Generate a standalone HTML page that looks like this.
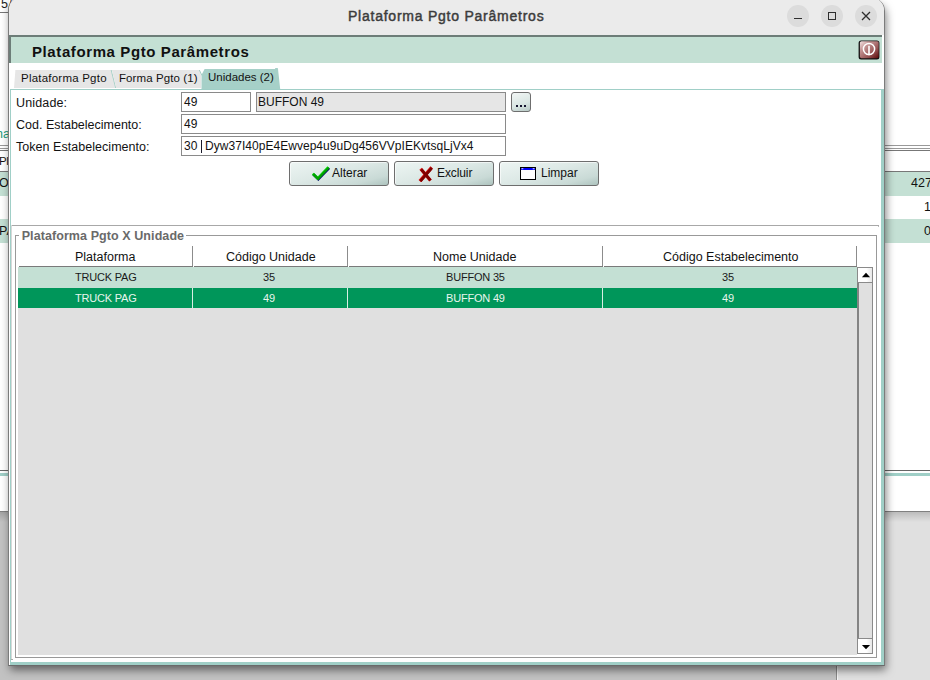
<!DOCTYPE html>
<html><head><meta charset="utf-8">
<style>
*{margin:0;padding:0;box-sizing:border-box}
html,body{width:930px;height:680px;overflow:hidden;background:#fff;font-family:"Liberation Sans",sans-serif;position:relative}
.a{position:absolute}
.t{position:absolute;white-space:nowrap;line-height:1;font-size:12.5px;color:#121212}
.inp{position:absolute;border:1px solid #8a8a8a;background:#fff}
.btn{position:absolute;width:100px;height:25px;border:1px solid #6e6e6e;border-radius:3px;background:linear-gradient(165deg,#edf5f3 0%,#dde9e6 45%,#c9dad6 80%,#adc3be 100%);box-shadow:inset 1px 1px 0 rgba(255,255,255,.6)}
.hd{position:absolute;top:246px;width:1px;height:20px;background:#8c8c8c}
.rt{position:absolute;white-space:nowrap;line-height:1;font-size:11px;letter-spacing:-0.2px;color:#1a1a1a}
.rd{position:absolute;top:288px;width:1px;height:20px;background:#d8eee4}
</style></head><body>
<!-- background app -->
<div class="a" style="left:0;top:511px;width:836px;height:169px;background:#c2c2c2"></div>
<div class="a" style="left:838px;top:511px;width:92px;height:169px;background:#e0e0e0"></div>
<div class="a" style="left:836px;top:511px;width:1px;height:169px;background:#8a8a8a"></div>
<div class="a" style="left:0;top:511px;width:930px;height:1px;background:#808080"></div><div class="a" style="left:0;top:512px;width:930px;height:10px;background:linear-gradient(rgba(0,0,0,.16),rgba(0,0,0,0))"></div>
<div class="a" style="left:837px;top:511px;width:1px;height:169px;background:#f4f4f4"></div>
<div class="a" style="left:0;top:12px;width:10px;height:1px;background:#777"></div>
<div class="t" style="left:1px;top:-2px;font-size:12.5px;color:#222;letter-spacing:0.5px">5/</div>
<div class="t" style="left:-4px;top:128px;font-size:12.5px;color:#1a9a7a">na</div>
<div class="a" style="left:0;top:145px;width:10px;height:1px;background:#999"></div>
<div class="a" style="left:0;top:148px;width:10px;height:1px;background:#999"></div><div class="a" style="left:0;top:150px;width:10px;height:1px;background:#777"></div>
<div class="t" style="left:-1px;top:156px;font-size:11.5px;letter-spacing:-0.5px">Pla</div>
<div class="a" style="left:0;top:171px;width:10px;height:1px;background:#777"></div>
<div class="a" style="left:0;top:172px;width:10px;height:24px;background:#c4e0d4"></div>
<div class="a" style="left:0;top:219px;width:10px;height:24px;background:#c4e0d4"></div>
<div class="t" style="left:-1px;top:177px">O</div>
<div class="t" style="left:-1px;top:225px">PA</div>
<div class="a" style="left:0;top:470px;width:10px;height:1px;background:#666"></div>
<div class="a" style="left:0;top:473px;width:10px;height:3px;background:#a0cfc7"></div>
<!-- right strip rows -->
<div class="a" style="left:884px;top:145px;width:46px;height:1px;background:#999"></div>
<div class="a" style="left:884px;top:148px;width:46px;height:1px;background:#999"></div><div class="a" style="left:884px;top:150px;width:46px;height:1px;background:#777"></div>
<div class="a" style="left:884px;top:171px;width:46px;height:1px;background:#777"></div>
<div class="a" style="left:884px;top:172px;width:46px;height:24px;background:#c4e0d4"></div>
<div class="a" style="left:884px;top:219px;width:46px;height:24px;background:#c4e0d4"></div>
<div class="t" style="left:911px;top:177px;">427</div>
<div class="t" style="left:924px;top:201px;">1</div>
<div class="t" style="left:924px;top:225px;">0</div>
<div class="a" style="left:884px;top:470px;width:46px;height:1px;background:#666"></div>
<div class="a" style="left:884px;top:473px;width:46px;height:3px;background:#a0cfc7"></div>

<!-- dialog shadow -->
<div class="a" style="left:9px;top:0;width:876px;height:666px;box-shadow:1px 4px 8px rgba(0,0,0,.5);border-top-right-radius:12px"></div>
<!-- dialog -->
<div class="a" style="left:8px;top:-2px;width:877px;height:668px;background:#fff;border-top-right-radius:13px;border-top-left-radius:12px;overflow:hidden;border-left:1px solid #7c7c7c;border-right:1px solid #7c7c7c;border-bottom:1px solid #6a6a6a">
  <div class="a" style="left:0;top:0;width:877px;height:37px;background:#ebebeb"></div>
</div>
<div class="t" style="left:348px;top:9px;font-size:14px;font-weight:normal;color:#3c3c3c;letter-spacing:0.76px;-webkit-text-stroke:0.45px #3c3c3c">Plataforma Pgto Parâmetros</div>
<!-- window buttons -->
<div class="a" style="left:787px;top:5px;width:22px;height:22px;border-radius:50%;background:#dcdcdc"></div>
<div class="a" style="left:821px;top:5px;width:22px;height:22px;border-radius:50%;background:#dcdcdc"></div>
<div class="a" style="left:855px;top:5px;width:22px;height:22px;border-radius:50%;background:#dcdcdc"></div>
<div class="a" style="left:794px;top:18px;width:8px;height:1.2px;background:#2e2e2e"></div>
<div class="a" style="left:828px;top:12px;width:8px;height:8px;border:1.3px solid #2e2e2e"></div>
<svg class="a" style="left:861px;top:11px" width="10" height="10" viewBox="0 0 10 10"><path d="M1 1L9 9M9 1L1 9" stroke="#2e2e2e" stroke-width="1.3"/></svg>

<!-- header band -->
<div class="a" style="left:9px;top:35px;width:873px;height:28px;background:#c4e0d4;border-top:2px solid #6d7d78;border-left:2px solid #6d7d78"></div>
<div class="t" style="left:32px;top:44px;font-size:15px;font-weight:bold;color:#111;letter-spacing:0.6px">Plataforma Pgto Parâmetros</div>
<!-- power icon -->
<svg class="a" style="left:857px;top:39px" width="24" height="22" viewBox="0 0 24 22">
<defs><linearGradient id="pg" x1="0" y1="0" x2="1" y2="1"><stop offset="0" stop-color="#f4e4e4"/><stop offset="0.3" stop-color="#c49494"/><stop offset="0.65" stop-color="#9a5858"/><stop offset="1" stop-color="#5a0808"/></linearGradient></defs>
<rect x="1.6" y="1.4" width="20.8" height="19" rx="2.5" fill="#111"/>
<rect x="2.9" y="2.2" width="18.8" height="17" rx="1.6" fill="url(#pg)"/>
<circle cx="12" cy="10" r="5.6" fill="none" stroke="#fff" stroke-width="1.5"/>
<path d="M12 6.8V16.2" stroke="#fff" stroke-width="1.6"/>
</svg>
<!-- tabs -->
<svg class="a" style="left:12px;top:66px" width="272" height="24" viewBox="0 0 272 24">
  <path d="M2 22L3.4 4H99.2L103.7 22Z" fill="#e6e6e6"/>
  <path d="M99.2 4L103.7 22" stroke="#a6d0c8" stroke-width="1" fill="none"/>
  <path d="M104.2 22L99.9 4H188L189 9V22Z" fill="#e6e6e6"/>
  <path d="M187.3 4L190 9.5" stroke="#a6d0c8" stroke-width="1" fill="none"/>
  <path d="M189.5 23V9L192.6 3H263L263.3 2H265.7L266 3L268.2 23Z" fill="#a6d0c8"/>
</svg>
<div class="t" style="left:21px;top:73px;font-size:11.5px;letter-spacing:0.22px">Plataforma Pgto</div>
<div class="t" style="left:119px;top:73px;font-size:11.5px;letter-spacing:0.1px">Forma Pgto (1)</div>
<div class="t" style="left:208px;top:72px;font-size:11.5px">Unidades (2)</div>

<!-- tab panel -->
<div class="a" style="left:10px;top:89px;width:874px;height:576px;border-top:1px solid #a0cfc7;border-left:1px solid #a0cfc7;border-right:3px solid #a0cfc7;border-bottom:3px solid #a0cfc7"></div>

<!-- form -->
<div class="t" style="left:16px;top:97px;letter-spacing:0.15px">Unidade:</div>
<div class="t" style="left:16px;top:119px;letter-spacing:0px">Cod. Estabelecimento:</div>
<div class="t" style="left:16px;top:141px;letter-spacing:0.04px">Token Estabelecimento:</div>
<div class="inp" style="left:181px;top:92px;width:70px;height:20px"></div>
<div class="inp" style="left:256px;top:92px;width:250px;height:20px;background:#e6e6e6"></div>
<div class="inp" style="left:181px;top:114px;width:325px;height:20px"></div>
<div class="inp" style="left:181px;top:136px;width:325px;height:20px"></div>
<div class="t" style="left:184px;top:96px;font-size:12px">49</div>
<div class="t" style="left:258px;top:96px;font-size:12px">BUFFON 49</div>
<div class="t" style="left:184px;top:118px;font-size:12px">49</div>
<div class="t" style="left:184px;top:140px;font-size:12px;letter-spacing:0.1px">30</div><div class="a" style="left:200.6px;top:140px;width:1.2px;height:12.7px;background:#1a1a2a"></div><div class="t" style="left:205px;top:140px;font-size:12px;letter-spacing:0.04px">Dyw37I40pE4Ewvep4u9uDg456VVpIEKvtsqLjVx4</div>
<div class="a" style="left:511px;top:92px;width:20px;height:20px;border:1px solid #6e6e6e;border-radius:3px;background:linear-gradient(160deg,#f2f6f5 0%,#d9e6e3 60%,#b6c8c4 100%)"></div>
<div class="a" style="left:516px;top:105px;width:2px;height:2px;background:#151530"></div><div class="a" style="left:520px;top:105px;width:2px;height:2px;background:#151530"></div><div class="a" style="left:524px;top:105px;width:2px;height:2px;background:#151530"></div>

<!-- buttons -->
<div class="btn" style="left:289px;top:161px"></div>
<div class="btn" style="left:394px;top:161px"></div>
<div class="btn" style="left:499px;top:161px"></div>
<svg class="a" style="left:311px;top:165px" width="19" height="17" viewBox="0 0 19 17"><path d="M3.3 10.3L7.3 14.1L17.1 3.9" stroke="#000070" stroke-width="2.8" fill="none" stroke-linecap="square"/><path d="M2.7 9.5L6.7 13.3L16.5 3.1" stroke="#10e010" stroke-width="2.6" fill="none" stroke-linecap="square"/><path d="M3 9.9L7 13.7L16.8 3.5" stroke="#00a000" stroke-width="2.2" fill="none" stroke-linecap="square"/></svg>
<div class="t" style="left:332px;top:167px;font-size:12px">Alterar</div>
<svg class="a" style="left:418px;top:165px" width="16" height="17" viewBox="0 0 16 17"><path d="M3.7 5L11.4 14.2M12.6 3.6L2.9 14.9" stroke="#e01010" stroke-width="3.3" stroke-linecap="square"/><path d="M4.1 5.3L11.7 14.4M12.9 4L3.3 15.2" stroke="#7e0000" stroke-width="2.7" stroke-linecap="square"/></svg>
<div class="t" style="left:437px;top:167px;font-size:12px;letter-spacing:-0.1px">Excluir</div>
<svg class="a" style="left:520px;top:167px" width="16" height="13" viewBox="0 0 16 13"><rect width="16" height="13" fill="#000"/><rect x="1" y="1" width="14" height="11" fill="#fff"/><rect x="1" y="1" width="14" height="2" fill="#0000f8"/><rect x="1.5" y="1.3" width="1.8" height="0.9" fill="#fff"/><rect x="12.7" y="1.3" width="1.8" height="0.9" fill="#fff"/></svg>
<div class="t" style="left:541px;top:167px;font-size:12px">Limpar</div>

<!-- sub panel line -->
<div class="a" style="left:11px;top:225px;width:868px;height:1px;background:#a8a8a8"></div><div class="a" style="left:878px;top:226px;width:1px;height:1px;background:#bbb"></div>
<div class="a" style="left:11px;top:225px;width:1px;height:434px;background:#d8d8d8"></div><div class="a" style="left:11px;top:659px;width:2px;height:1px;background:#aaa"></div>

<!-- groupbox -->
<div class="a" style="left:15px;top:235px;width:862px;height:423px;border:1px solid #999"></div>
<div class="a" style="left:19px;top:230px;width:167px;height:10px;background:#fff"></div>
<div class="t" style="left:21.7px;top:230px;font-weight:bold;color:#6a6a6a;letter-spacing:0.08px">Plataforma Pgto X Unidade</div>

<!-- table -->
<div class="a" style="left:18px;top:267px;width:839px;height:388px;background:#e0e0e0"></div>
<div class="a" style="left:19px;top:266px;width:838px;height:1px;background:#7a7a7a"></div>
<div class="hd" style="left:192px"></div><div class="a" style="left:193px;top:266px;width:1px;height:1px;background:#fff"></div><div class="a" style="left:348px;top:266px;width:1px;height:1px;background:#fff"></div><div class="a" style="left:603px;top:266px;width:1px;height:1px;background:#fff"></div>
<div class="hd" style="left:347px"></div>
<div class="hd" style="left:602px"></div>
<div class="hd" style="left:856px"></div>
<div class="t" style="left:75px;top:251px">Plataforma</div>
<div class="t" style="left:226px;top:251px">Código Unidade</div>
<div class="t" style="left:433px;top:251px">Nome Unidade</div>
<div class="t" style="left:663px;top:251px">Código Estabelecimento</div>
<div class="a" style="left:18px;top:267px;width:839px;height:21px;background:#c4e0d4"></div>
<div class="a" style="left:18px;top:288px;width:839px;height:20px;background:#00965a"></div>
<div class="rd" style="left:192px"></div>
<div class="rd" style="left:347px"></div>
<div class="rd" style="left:602px"></div>
<div class="rt" style="left:75px;top:272px">TRUCK PAG</div>
<div class="rt" style="left:263px;top:272px">35</div>
<div class="rt" style="left:446px;top:272px">BUFFON 35</div>
<div class="rt" style="left:722px;top:272px">35</div>
<div class="rt" style="left:75px;top:293px;color:#e8f5ee">TRUCK PAG</div>
<div class="rt" style="left:263px;top:293px;color:#e8f5ee">49</div>
<div class="rt" style="left:446px;top:293px;color:#e8f5ee">BUFFON 49</div>
<div class="rt" style="left:722px;top:293px;color:#e8f5ee">49</div>

<!-- scrollbar -->
<div class="a" style="left:857px;top:267px;width:16px;height:387px;background:#e0e0e0;border-left:2px solid #848484;border-right:1px solid #8a8a8a"></div>
<div class="a" style="left:857px;top:267px;width:16px;height:16px;border:1px solid #8a8a8a;background:linear-gradient(90deg,#fff 60%,#e8e8e8)"></div>
<div class="a" style="left:857px;top:638px;width:16px;height:16px;border:1px solid #8a8a8a;background:linear-gradient(90deg,#fff 60%,#e8e8e8)"></div>
<svg class="a" style="left:857px;top:267px" width="16" height="16" viewBox="0 0 16 16"><path d="M4.9 10.2H13.1L9 5.7Z" fill="#000"/></svg>
<svg class="a" style="left:857px;top:638px" width="16" height="16" viewBox="0 0 16 16"><path d="M4.9 7.1H13.1L9 11.3Z" fill="#000"/></svg>
</body></html>
